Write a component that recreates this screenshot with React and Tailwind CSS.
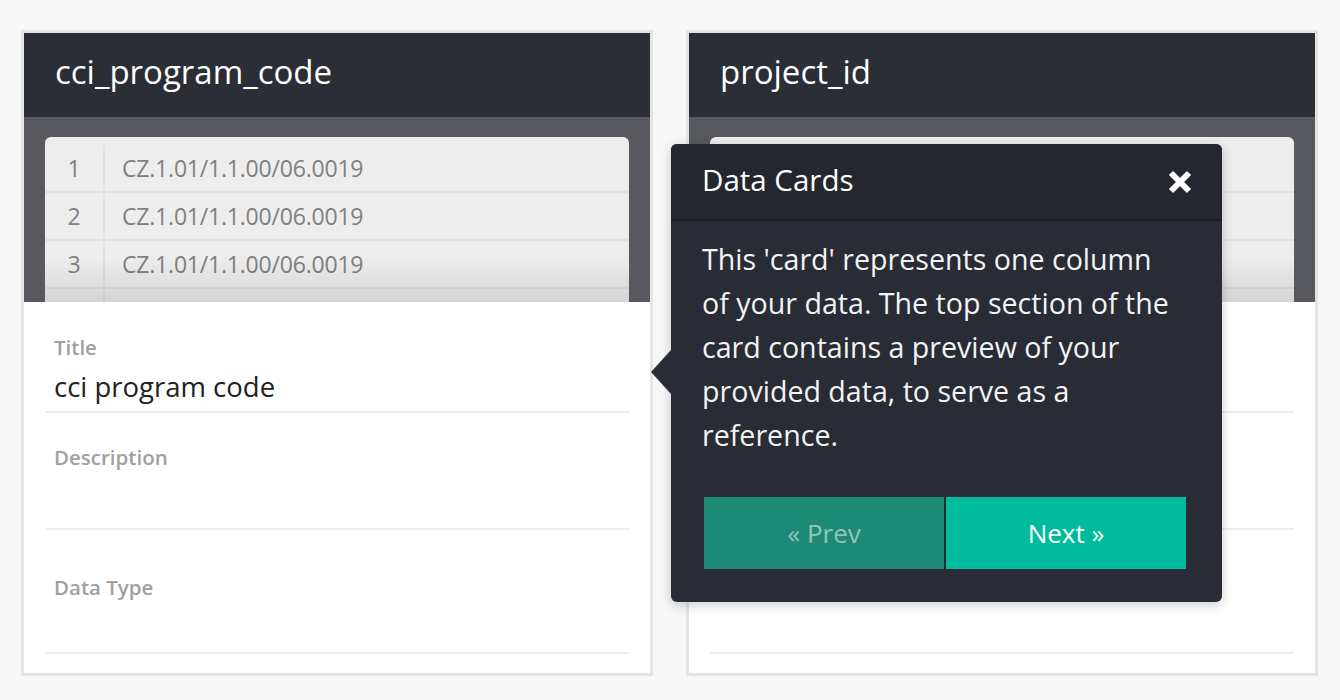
import { useState } from "react";

const rows = ["CZ.1.01/1.1.00/06.0019", "CZ.1.01/1.1.00/06.0019", "CZ.1.01/1.1.00/06.0019", "CZ.1.01/1.1.00/06.0019"];

const bodyLines = [
    "This 'card' represents one column",
    "of your data. The top section of the",
    "card contains a preview of your",
    "provided data, to serve as a",
    "reference.",
];

const DataCard = ({ name, title }) => {
    return (
        <div className="w-[632px] border-[3px] border-[#e4e4e4] bg-white">
            <div className="h-[84px] bg-[#2b2e35] flex items-center px-[31px]">
                <span className="text-[33px] text-white leading-none pb-[8px]">{name}</span>
            </div>
            <div className="relative h-[185px] bg-[#58595e] px-[21px] pt-[20px] overflow-hidden">
                <div className="bg-[#ededed] rounded-t-[6px] pt-[8px]">
                    {rows.map((value, i) => (
                        <div key={i} className="flex h-[48px] border-b-2 border-[#dfe0e0]">
                            <div className="w-[60px] border-r-2 border-[#dfe0e0] flex items-center justify-center text-[23px] text-[#808080]">{i + 1}</div>
                            <div className="flex items-center pl-[17px] text-[23px] text-[#808080] tracking-[-0.2px]">{value}</div>
                        </div>
                    ))}
                </div>
                <div className="absolute left-[21px] right-[21px] bottom-0 h-[45px] bg-gradient-to-b from-transparent to-[#0000001a]" />
            </div>
            <div className="px-[21px] pb-[19px]">
                <div className="h-[111px] border-b-2 border-[#ececec] px-[9px] pt-[32px]">
                    <div className="text-[20.5px] leading-[26px] font-semibold text-[#a0a0a0]">Title</div>
                    <div className="text-[27.5px] leading-[34px] text-[#222] mt-[10px]">{title}</div>
                </div>
                <div className="h-[117px] border-b-2 border-[#ececec] px-[9px] pt-[31px]">
                    <div className="text-[20.5px] leading-[26px] font-semibold text-[#a0a0a0]">Description</div>
                </div>
                <div className="h-[124px] border-b-2 border-[#ececec] px-[9px] pt-[44px]">
                    <div className="text-[20.5px] leading-[26px] font-semibold text-[#a0a0a0]">Data Type</div>
                </div>
            </div>
        </div>
    );
};

const Popover = ({ onClose }) => {
    return (
        <div className="absolute left-[671px] top-[144px] w-[551px] rounded-[6px] bg-[#292c34] shadow-[0_3px_12px_rgba(0,0,0,0.2)]">
            <div className="absolute left-[-20px] top-[206px] w-0 h-0 border-y-[22px] border-y-transparent border-r-[20px] border-r-[#292c34]" />
            <div className="h-[77px] flex items-center justify-between pl-[31px] pr-[29px] bg-[#24272e] rounded-t-[6px] border-b-2 border-[#1c1e23]">
                <span className="text-[29.5px] text-white pb-[2px]">Data Cards</span>
                <button onClick={onClose} className="text-white">
                    <svg width="26" height="26" viewBox="0 0 26 26">
                        <path d="M4 4 L22 22 M22 4 L4 22" stroke="white" strokeWidth="6" strokeLinecap="butt" />
                    </svg>
                </button>
            </div>
            <div className="px-[31px] pt-[16px] text-[28.6px] leading-[44px] text-[#f3f3f3]">
                {bodyLines.map((line) => (
                    <div key={line} className="whitespace-nowrap">{line}</div>
                ))}
            </div>
            <div className="flex gap-[2px] pl-[33px] pr-[36px] pt-[40px] pb-[33px]">
                <button className="flex-1 h-[72px] bg-[#1c8a76] text-[26px] text-[#8ec5b8]">« Prev</button>
                <button className="flex-1 h-[72px] bg-[#00bc9c] text-[26px] text-white">Next »</button>
            </div>
        </div>
    );
};

export default function App() {
    const [open, setOpen] = useState(true);

    return (
        <div className="relative w-[1340px] h-[700px] bg-[#f7f7f7] overflow-hidden" style={{ fontFamily: '"Open Sans", "Noto Sans", sans-serif' }}>
            <div className="flex gap-[33px] pl-[21px] pt-[30px]">
                <DataCard name="cci_program_code" title="cci program code" />
                <DataCard name="project_id" title="project id" />
            </div>
            {open && <Popover onClose={() => setOpen(false)} />}
        </div>
    );
}
